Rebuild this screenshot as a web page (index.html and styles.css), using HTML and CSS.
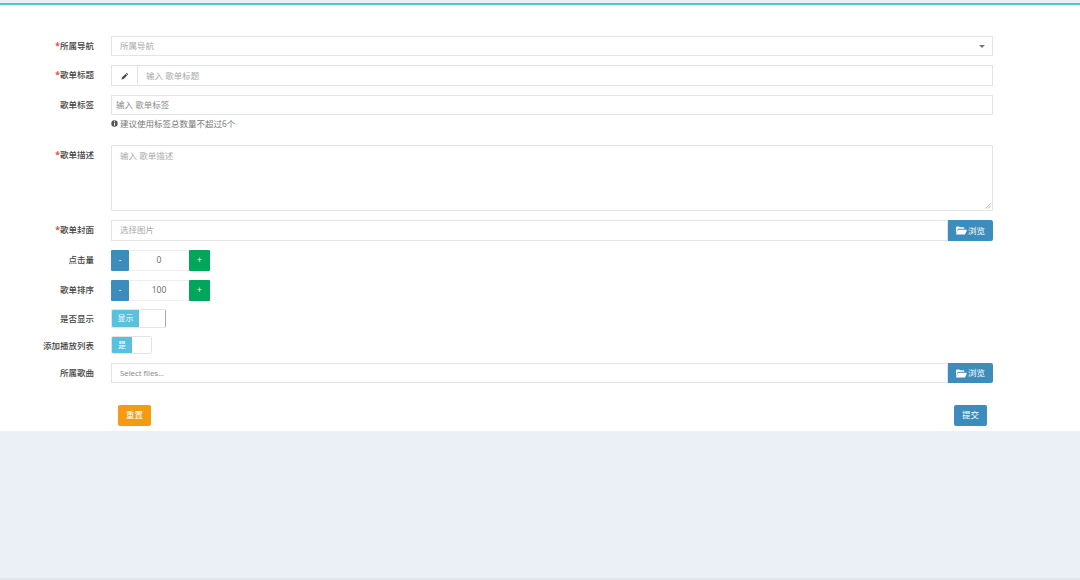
FILE: index.html
```html
<!DOCTYPE html>
<html lang="en">
<head>
  <meta charset="UTF-8">
  <title>歌单</title>
  <link rel="stylesheet" href="styles.css">
</head>
<body>
  <div class="panel">
    <form class="song-form">
      <div class="row">
        <label class="row-label"><span class="req">*</span>所属导航</label>
        <div class="field select-box">
          <span class="ph">所属导航</span>
          <span class="caret"></span>
        </div>
      </div>

      <div class="row">
        <label class="row-label"><span class="req">*</span>歌单标题</label>
        <div class="field title-box">
          <span class="addon">
            <svg class="pencil" viewBox="0 0 12 12"><path d="M8.6 1.2l2.2 2.2-1.1 1.1-2.2-2.2zM6.9 2.9l2.2 2.2-5.3 5.3-3 .7.7-3z"/></svg>
          </span>
          <span class="ph title-ph">输入 歌单标题</span>
        </div>
      </div>

      <div class="row row-tags">
        <label class="row-label">歌单标签</label>
        <div class="col">
          <div class="field tags-box"><span class="ph-dark">输入 歌单标签</span></div>
          <p class="help">
            <svg class="info" viewBox="0 0 12 12"><circle cx="6" cy="6" r="5.5"/><rect class="info-mark" x="5.2" y="2.2" width="1.7" height="1.7"/><rect class="info-mark" x="5.2" y="4.9" width="1.7" height="4.6"/></svg>
            建议使用标签总数量不超过6个
          </p>
        </div>
      </div>

      <div class="row">
        <label class="row-label"><span class="req">*</span>歌单描述</label>
        <div class="field area-box">
          <span class="ph">输入 歌单描述</span>
          <svg class="grip" viewBox="0 0 6 6"><path d="M5.5 .5L.5 5.5M5.5 3L3 5.5"/></svg>
        </div>
      </div>

      <div class="row">
        <label class="row-label"><span class="req">*</span>歌单封面</label>
        <div class="file-group">
          <div class="field file-box"><span class="ph">选择图片</span></div>
          <button type="button" class="browse">
            <svg class="folder" viewBox="0 0 14 11"><path d="M0 9.5V1.6C0 .9.5.4 1.2.4h2.6c.6 0 1 .5 1.1 1h4.6c.7 0 1.1.5 1.1 1.1v.9H3.4c-.6 0-1.1.3-1.4.8z"/><path d="M3.2 4.4H13c.7 0 1.1.6.8 1.2l-2 4.2c-.2.5-.7.8-1.2.8H.9c-.6 0-.9-.6-.7-1l2-4.4c.2-.5.6-.8 1-.8z"/></svg>
            浏览
          </button>
        </div>
      </div>

      <div class="row">
        <label class="row-label">点击量</label>
        <div class="stepper">
          <span class="step minus">-</span>
          <span class="step-val">0</span>
          <span class="step plus">+</span>
        </div>
      </div>

      <div class="row">
        <label class="row-label">歌单排序</label>
        <div class="stepper">
          <span class="step minus">-</span>
          <span class="step-val">100</span>
          <span class="step plus">+</span>
        </div>
      </div>

      <div class="row row-switch">
        <label class="row-label">是否显示</label>
        <div class="switch switch-wide">
          <span class="switch-on">显示</span>
          <span class="switch-off"></span>
        </div>
      </div>

      <div class="row row-switch-small">
        <label class="row-label">添加播放列表</label>
        <div class="switch switch-small">
          <span class="switch-on">是</span>
          <span class="switch-off"></span>
        </div>
      </div>

      <div class="row row-files">
        <label class="row-label">所属歌曲</label>
        <div class="file-group">
          <div class="field file-box files-box"><span class="ph-latin">Select files...</span></div>
          <button type="button" class="browse">
            <svg class="folder" viewBox="0 0 14 11"><path d="M0 9.5V1.6C0 .9.5.4 1.2.4h2.6c.6 0 1 .5 1.1 1h4.6c.7 0 1.1.5 1.1 1.1v.9H3.4c-.6 0-1.1.3-1.4.8z"/><path d="M3.2 4.4H13c.7 0 1.1.6.8 1.2l-2 4.2c-.2.5-.7.8-1.2.8H.9c-.6 0-.9-.6-.7-1l2-4.4c.2-.5.6-.8 1-.8z"/></svg>
            浏览
          </button>
        </div>
      </div>

      <div class="actions">
        <button type="reset" class="btn btn-reset">重置</button>
        <button type="submit" class="btn btn-submit">提交</button>
      </div>
    </form>
  </div>
  <div class="bottom-line"></div>
</body>
</html>
```

FILE: styles.css
```css
html, body {
  margin: 0;
  height: 580px;
  overflow: hidden;
}

body {
  display: flex;
  flex-direction: column;
  font-family: "Open Sans", "Noto Sans CJK SC", sans-serif;
  font-size: 8.5px;
  color: #444;
  background-color: #ebeff6;
}

.panel {
  height: 428px;
  box-sizing: border-box;
  margin-top: 3px;
  border-top: 2px solid #4cc3dd;
  background-color: #fff;
}

.song-form {
  padding-top: 31px;
}

.row {
  display: flex;
  margin-bottom: 9px;
  padding-right: 87px;
}

.row-label {
  flex: none;
  width: 94px;
  margin-right: 17px;
  line-height: 19px;
  text-align: right;
  font-weight: 500;
  color: #444;
}

.req {
  color: #d9534f;
  font-weight: 700;
}

.col {
  flex: 1;
}

.field {
  flex: 1;
  box-sizing: border-box;
  height: 20px;
  line-height: 18px;
  border: 1px solid #e4e4e4;
  background-color: #fff;
}

.ph {
  color: #aaa;
}

.ph-dark {
  color: #8c8c8c;
}

.ph-latin {
  color: #888;
  font-size: 8px;
  letter-spacing: -.1px;
}

.select-box {
  display: flex;
  justify-content: space-between;
  align-items: center;
  padding: 0 7px 0 8px;
}

.caret {
  width: 0;
  height: 0;
  border-left: 3px solid transparent;
  border-right: 3px solid transparent;
  border-top: 3px solid #777;
}

.title-box {
  display: flex;
  height: 21px;
  line-height: 19px;
}

.addon {
  display: flex;
  align-items: center;
  justify-content: center;
  width: 25px;
  border-right: 1px solid #e4e4e4;
}

.pencil {
  width: 8px;
  height: 8px;
  fill: #444;
}

.title-ph {
  padding-left: 8px;
}

.row-tags {
  margin-bottom: 16px;
}

.row-tags .row-label {
  line-height: 20px;
}

.tags-box {
  padding-left: 4px;
}

.help {
  display: flex;
  align-items: center;
  gap: 2px;
  height: 11px;
  margin: 3px 0 0;
  color: #777;
  line-height: 11px;
}

.info {
  flex: none;
  width: 7px;
  height: 7px;
  fill: #555;
}

.info-mark {
  fill: #fff;
}

.area-box {
  position: relative;
  height: 66px;
  padding-left: 8px;
  line-height: 19px;
  border-radius: 1px;
}

.grip {
  position: absolute;
  right: 1px;
  bottom: 1px;
  width: 6px;
  height: 6px;
  fill: none;
  stroke: #999;
  stroke-width: .7;
}

.file-group {
  flex: 1;
  display: flex;
  height: 21px;
}

.file-box {
  height: 21px;
  padding-left: 8px;
  line-height: 18px;
}

.files-box {
  height: 20px;
}

.browse {
  flex: none;
  display: flex;
  align-items: center;
  justify-content: center;
  gap: 1px;
  width: 45px;
  padding: 0 0 2px;
  border: none;
  border-radius: 0 2px 2px 0;
  font: inherit;
  color: #fff;
  background-color: #3c8dbc;
}

.folder {
  width: 11px;
  height: 9px;
  margin-top: 2px;
  fill: #fff;
}

.stepper {
  display: flex;
  width: 99px;
  height: 21px;
  line-height: 20px;
  text-align: center;
}

.step {
  flex: none;
  color: #fff;
  border-radius: 1px;
}

.minus {
  width: 18px;
  background-color: #3c8dbc;
}

.plus {
  width: 21px;
  background-color: #00a65a;
}

.step-val {
  flex: 1;
  box-sizing: border-box;
  height: 21px;
  line-height: 18px;
  color: #666;
  border-top: 1px solid #eee;
  border-bottom: 1px solid #eee;
}

.row-switch {
  margin-top: -1px;
  margin-bottom: 8px;
}

.row-switch-small {
  margin-bottom: 8px;
}

.switch {
  display: flex;
  box-sizing: border-box;
  border-radius: 2px;
  overflow: hidden;
  border: 1px solid #e4e4e4;
  text-align: center;
  color: #fff;
  font-size: 8px;
}

.switch-wide {
  width: 55px;
  height: 19px;
  border-right: 1px solid #aaa;
}

.switch-small {
  width: 41px;
  height: 18px;
}

.switch-on {
  line-height: 15px;
  background-color: #5bc0de;
}

.switch-wide .switch-on {
  width: 27px;
}

.switch-small .switch-on {
  width: 20px;
}

.switch-off {
  flex: 1;
  background-color: #fff;
}

.row-files {
  margin-bottom: 22px;
}

.row-files .file-group {
  height: 20px;
}

.actions {
  display: flex;
  justify-content: space-between;
  padding: 0 93px 0 118px;
}

.btn {
  width: 33px;
  height: 21px;
  padding: 0 0 3px;
  border: none;
  border-radius: 2px;
  font: inherit;
  color: #fff;
}

.btn-reset {
  background-color: #f39c12;
}

.btn-submit {
  background-color: #3c8dbc;
}

.bottom-line {
  height: 2px;
  margin-top: auto;
  background-color: #e3e6ea;
}
```
